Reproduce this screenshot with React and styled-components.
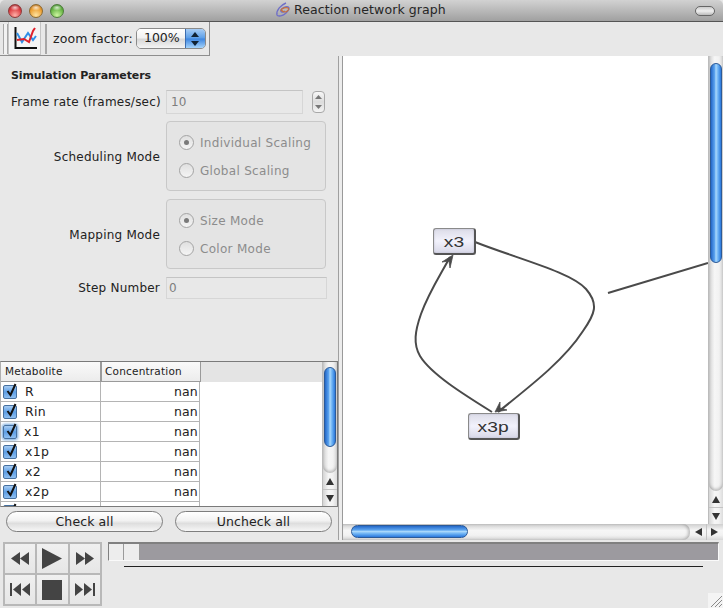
import React from 'react'
import styled, { createGlobalStyle } from 'styled-components'

const GlobalStyle = createGlobalStyle`
  html, body { margin: 0; padding: 0; overflow: hidden; background: #e8e8e8; }
  * { box-sizing: border-box; }
`

const Window = styled.div`
  position: relative;
  width: 723px;
  height: 608px;
  display: flex;
  flex-direction: column;
  background: #e8e8e8;
  font-family: "DejaVu Sans", sans-serif;
  font-size: 12px;
  color: #222;
  overflow: hidden;
`

const TitleBar = styled.div`
  position: relative;
  height: 22px;
  flex: none;
  display: flex;
  align-items: center;
  justify-content: center;
  gap: 3px;
  padding: 0 2px 2px 0;
  background: linear-gradient(#d2d2d2, #a0a0a0);
  border-bottom: 1px solid #555;
  border-radius: 5px 5px 0 0;
  font-size: 12.5px;
  letter-spacing: 0.1px;
  color: #262626;
`

const Lights = styled.div`
  position: absolute;
  left: 8px;
  top: 4px;
  display: flex;
  gap: 7px;
`

const Light = styled.span`
  width: 14px;
  height: 14px;
  border-radius: 50%;
  border: 1px solid ${(p) => p.$edge};
  background:
    radial-gradient(ellipse 5px 3px at 50% 22%, rgba(255, 255, 255, 0.75), transparent),
    radial-gradient(circle at 50% 85%, ${(p) => p.$glow}, ${(p) => p.$color} 60%, ${(p) => p.$dark});
`

const Pill = styled.span`
  position: absolute;
  right: 8px;
  top: 6px;
  width: 20px;
  height: 10px;
  border-radius: 5px;
  border: 1px solid #666;
  background: linear-gradient(#ccc, #eee 50%, #bbb);
`

const ToolBar = styled.div`
  width: 210px;
  height: 34px;
  flex: none;
  display: flex;
  align-items: center;
  border-right: 1px solid #8e8e8e;
  border-bottom: 1px solid #8e8e8e;
`

const Grip = styled.span`
  width: ${(p) => p.$width}px;
  height: 30px;
  flex: none;
  margin-left: ${(p) => p.$left}px;
  border-left: 1px solid #a8a8a8;
  border-right: 1px solid #a8a8a8;
  background: #f2f2f2;
`

const ToolButton = styled.div`
  width: 33px;
  height: 33px;
  flex: none;
  display: flex;
  align-items: center;
  justify-content: center;
  background: #f4f4f4;
  border: 1px solid #c4c4c4;
  border-top: none;
`

const ZoomLabel = styled.span`
  margin-left: 6px;
  font-size: 12.5px;
  letter-spacing: 0.1px;
`

const Select = styled.div`
  width: 70px;
  height: 21px;
  margin-left: 3px;
  flex: none;
  display: flex;
  border: 1px solid #8a8a8a;
  border-radius: 5px;
  overflow: hidden;
`

const SelectText = styled.span`
  flex: 1;
  text-align: center;
  line-height: 18px;
  padding-left: 2px;
  font-size: 12.5px;
  background: linear-gradient(#fff, #f2f2f2 45%, #d8d8d8 55%, #f4f4f4);
`

const SelectArrows = styled.span`
  width: 20px;
  display: flex;
  align-items: center;
  justify-content: center;
  background: linear-gradient(#a8cdf5, #5b9ee8 48%, #3d85e0 52%, #a6d4fb);
  border-left: 1px solid #3b6db0;
`

const Main = styled.div`
  height: 484px;
  flex: none;
  display: flex;
`

const LeftPanel = styled.div`
  width: 338px;
  flex: none;
  display: flex;
  flex-direction: column;
`

const Params = styled.div`
  height: 305px;
  flex: none;
  padding: 12px 0 0 11px;
  display: flex;
  flex-direction: column;
`

const SectionTitle = styled.div`
  font-weight: 700;
  font-size: 11px;
  letter-spacing: -0.1px;
  line-height: 15px;
`

const Row = styled.div`
  display: flex;
  align-items: center;
  margin-top: ${(p) => p.$top}px;
`

const Label = styled.div`
  width: 149px;
  flex: none;
  padding-top: ${(p) => (p.$drop ? 2 : 0)}px;
  text-align: right;
  white-space: nowrap;
  letter-spacing: 0.22px;
  font-size: 12px;
`

const TextField = styled.div`
  width: ${(p) => p.$width}px;
  height: ${(p) => p.$height}px;
  margin-left: 6px;
  flex: none;
  padding-left: ${(p) => p.$pad}px;
  line-height: ${(p) => p.$height - 2}px;
  color: #7e7e7e;
  font-size: 12px;
  background: #e8e8e8;
  border: 1px solid #d6d6d6;
  border-top-color: #c4c4c4;
`

const Stepper = styled.div`
  width: 13px;
  height: 22px;
  margin-left: 9px;
  flex: none;
  display: flex;
  align-items: center;
  justify-content: center;
  border: 1px solid #a8a8a8;
  border-radius: 4px;
  background: linear-gradient(#f8f8f8, #dcdcdc 50%, #f4f4f4);
`

const RadioBox = styled.div`
  width: 160px;
  height: 70px;
  margin-left: 6px;
  flex: none;
  display: flex;
  flex-direction: column;
  gap: 9px;
  padding: 11px 0 0 12px;
  border: 1px solid #c8c8c8;
  border-radius: 4px;
  background: #e4e4e4;
`

const RadioRow = styled.div`
  display: flex;
  align-items: center;
  gap: 6px;
  height: 19px;
  color: #8c8c8c;
  font-size: 12px;
  letter-spacing: 0.3px;
`

const RadioMark = styled.span`
  width: 15px;
  height: 15px;
  flex: none;
  display: flex;
  align-items: center;
  justify-content: center;
  border-radius: 50%;
  border: 1px solid #a4a4a4;
  background: linear-gradient(#e0e0e0, #f4f4f4);
  &::after {
    content: "";
    width: 5px;
    height: 5px;
    border-radius: 50%;
    background: ${(p) => (p.$on ? '#7a7a7a' : 'transparent')};
  }
`

const TableFrame = styled.div`
  height: 146px;
  flex: none;
  display: flex;
  border: 1px solid #7a7a7a;
  border-left-color: #b0b0b0;
  overflow: hidden;
`

const TableBody = styled.div`
  flex: 1;
  background: #fff;
  overflow: hidden;
`

const HeaderRow = styled.div`
  height: 20px;
  display: flex;
  background: #e4e4e4;
`

const HeaderCell = styled.div`
  width: ${(p) => p.$width}px;
  padding-left: ${(p) => (p.$first ? 4 : 3)}px;
  line-height: 18px;
  font-size: 10.5px;
  letter-spacing: 0.2px;
  background: linear-gradient(#fafafa, #ececec);
  border: 1px solid #9a9a9a;
  border-left: ${(p) => (p.$first ? 'none' : '1px solid #9a9a9a')};
  border-top: none;
`

const DataRow = styled.div`
  height: 20px;
  width: 199px;
  display: flex;
  border-bottom: 1px solid #b4b4b4;
`

const NameCell = styled.div`
  width: 100px;
  flex: none;
  display: flex;
  align-items: center;
  gap: ${(p) => (p.$focus ? 7 : 8)}px;
  padding-left: 2px;
  border-right: 1px solid #b4b4b4;
  font-size: 12.5px;
  letter-spacing: 0.3px;
`

const ValueCell = styled.div`
  width: 99px;
  text-align: right;
  padding-right: 1px;
  line-height: 19px;
  font-size: 12.5px;
  letter-spacing: 0.2px;
  border-right: 1px solid #b4b4b4;
`

const Check = styled.span`
  position: relative;
  width: 14px;
  height: 14px;
  flex: none;
  border: 1px solid #46709f;
  border-radius: 2px;
  background: linear-gradient(#a9cdf3, #5e9fe6 50%, #8fc0f2);
  box-shadow: ${(p) => (p.$focus ? '0 0 3px 1px #6fa4dc' : 'none')};
  & svg {
    position: absolute;
    left: 1px;
    top: -3px;
  }
`

const ScrollTrack = styled.div`
  position: relative;
  flex: none;
  display: flex;
  flex-direction: ${(p) => (p.$horizontal ? 'row' : 'column')};
  width: ${(p) => (p.$horizontal ? 'auto' : `${p.$size}px`)};
  height: ${(p) => (p.$horizontal ? `${p.$size}px` : 'auto')};
  background: ${(p) =>
    p.$horizontal
      ? 'linear-gradient(#cfcfcf, #f6f6f6 40%, #f2f2f2 70%, #d8d8d8)'
      : 'linear-gradient(90deg, #d4d4d4, #f6f6f6 40%, #f2f2f2 70%, #dcdcdc)'};
  border-left: ${(p) => (p.$horizontal ? 'none' : '1px solid #bcbcbc')};
`

const ScrollRail = styled.div`
  flex: 1;
  min-width: 0;
  min-height: 0;
  display: flex;
  flex-direction: ${(p) => (p.$horizontal ? 'row' : 'column')};
  padding: ${(p) => (p.$horizontal ? '1px 0 2px 8px' : `${p.$top}px 1px 0 1px`)};
  border-radius: ${(p) => (p.$horizontal ? '0 7px 7px 0' : '0 0 7px 7px')};
  box-shadow: ${(p) =>
    p.$horizontal ? 'inset -2px 0 3px rgba(0, 0, 0, 0.22)' : 'inset 0 -2px 3px rgba(0, 0, 0, 0.22)'};
`

const Thumb = styled.div`
  flex: none;
  width: ${(p) => (p.$horizontal ? `${p.$length}px` : 'auto')};
  height: ${(p) => (p.$horizontal ? 'auto' : `${p.$length}px`)};
  align-self: stretch;
  border-radius: 7px;
  border: 1px solid #2b5a98;
  background: ${(p) =>
    p.$horizontal
      ? 'linear-gradient(#2468c8, #5aa2ee 35%, #a9d8fb 50%, #6cb2f4 70%, #2a78dc)'
      : 'linear-gradient(90deg, #2468c8, #5aa2ee 35%, #a9d8fb 50%, #6cb2f4 70%, #2a78dc)'};
`

const ScrollEnd = styled.div`
  width: ${(p) => (p.$horizontal ? '33px' : 'auto')};
  height: ${(p) => (p.$horizontal ? 'auto' : '33px')};
  flex: none;
  display: flex;
  flex-direction: ${(p) => (p.$horizontal ? 'row' : 'column')};
`

const ScrollButton = styled.div`
  flex: 1;
  display: flex;
  align-items: center;
  justify-content: center;
  border-top: ${(p) => (p.$divide && !p.$horizontal ? '1px solid #c4c4c4' : 'none')};
  border-left: ${(p) => (p.$divide && p.$horizontal ? '1px solid #c4c4c4' : 'none')};
`

const ButtonRow = styled.div`
  display: flex;
  gap: 12px;
  padding: 4px 0 0 6px;
`

const PillButton = styled.button`
  width: 157px;
  height: 21px;
  padding: 0;
  font-family: inherit;
  font-size: 12.5px;
  letter-spacing: 0.1px;
  color: #222;
  border: 1px solid #7e7e7e;
  border-radius: 11px;
  background: linear-gradient(#fff, #f2f2f2 45%, #dedede 60%, #f6f6f6);
`

const Splitter = styled.div`
  width: 5px;
  flex: none;
  border-left: 1px solid #a0a0a0;
  border-right: 1px solid #9a9a9a;
  background: #ececec;
`

const RightPanel = styled.div`
  flex: 1;
  min-width: 0;
  display: flex;
  flex-direction: column;
`

const CanvasRow = styled.div`
  flex: 1;
  min-height: 0;
  display: flex;
`

const Canvas = styled.div`
  position: relative;
  flex: 1;
  min-width: 0;
  background: #fff;
  overflow: hidden;
`

const Edges = styled.svg`
  position: absolute;
  left: 0;
  top: 0;
`

const Node = styled.div`
  position: absolute;
  left: ${(p) => p.$x}px;
  top: ${(p) => p.$y}px;
  width: ${(p) => p.$w}px;
  height: ${(p) => p.$h}px;
  display: flex;
  align-items: center;
  justify-content: center;
  border: 1px solid #8a8a8a;
  border-right: 2px solid #555;
  border-bottom: 2px solid #555;
  border-radius: 3px;
  background: linear-gradient(#dcdce8, #f2f2fc 50%, #d8d8e8);
  box-shadow: inset 0 0 2px #b8b8c8;
`

const NodeText = styled.span`
  display: block;
  font-family: "Liberation Sans", sans-serif;
  font-size: 15px;
  line-height: 1;
  color: #333;
  transform: scaleX(1.28);
`

const BottomBar = styled.div`
  flex: 1;
  display: flex;
  padding: 2px 0 0 3px;
`

const Transport = styled.div`
  width: 99px;
  height: 64px;
  flex: none;
  display: grid;
  grid-template-columns: repeat(3, 1fr);
  grid-template-rows: repeat(2, 1fr);
  border: 1px solid #b8b8b8;
`

const TransportButton = styled.div`
  display: flex;
  align-items: center;
  justify-content: center;
  background: linear-gradient(#f0f0f0, #e6e6e6);
  border: 1px solid #b8b8b8;
`

const SliderColumn = styled.div`
  width: 611px;
  margin-left: 6px;
  flex: none;
  display: flex;
  flex-direction: column;
`

const SliderTrack = styled.div`
  height: 19px;
  display: flex;
  background: #9c9a9f;
  border-top: 2px solid #808080;
  border-left: 1px solid #808080;
  border-bottom: 1px solid #fafafa;
  border-right: 1px solid #fafafa;
`

const SliderKnob = styled.span`
  width: ${(p) => p.$width}px;
  flex: none;
  background: #ededed;
  border-right: 1px solid #9a9a9a;
`

const SliderRule = styled.div`
  height: 1px;
  margin: 5px 16px 0 16px;
  background: #222;
`

const ResizeCorner = styled.svg`
  position: absolute;
  right: 0;
  bottom: 0;
`

const metabolites = ['R', 'Rin', 'x1', 'x1p', 'x2', 'x2p', '']

const Arrow = ({ dir, color = '#333', size = 8 }) => {
  const pts = {
    up: '0,8 4,1 8,8',
    down: '0,1 4,8 8,1',
    left: '8,0 1,4 8,8',
    right: '0,0 7,4 0,8',
  }
  return (
    <svg width={size} height={size} viewBox="0 0 8 8">
      <polygon points={pts[dir]} fill={color} />
    </svg>
  )
}

const VScroll = ({ size, top, length }) => (
  <ScrollTrack $size={size}>
    <ScrollRail $top={top}>
      <Thumb $length={length} />
    </ScrollRail>
    <ScrollEnd>
      <ScrollButton><Arrow dir="up" /></ScrollButton>
      <ScrollButton $divide><Arrow dir="down" /></ScrollButton>
    </ScrollEnd>
  </ScrollTrack>
)

const ChartIcon = () => (
  <svg width="26" height="26" viewBox="0 0 26 26" fill="none">
    <path d="M3.5 2v21H25" stroke="#111" strokeWidth="2" />
    <path d="M5 8l5 9 6-9 5 7 3-4" stroke="#2f8fe8" strokeWidth="2" />
    <path d="M5 15l7-1 5 3 4-11 2-3" stroke="#e0202a" strokeWidth="2" />
  </svg>
)

const SwirlIcon = () => (
  <svg width="16" height="16" viewBox="0 0 16 16" fill="none">
    <path d="M11 1C6 3 1 8 2 13c1 2 6 1 9-2s4-5 2-6-6 1-7 3 2 3 4 1" stroke="#6f6fc8" strokeWidth="1.4" />
    <path d="M6 8c1-2 5-3 7-2s-1 4-3 4-3-1-4-2z" stroke="#c8703a" strokeWidth="1.2" />
  </svg>
)

const TransportIcon = ({ kind }) => {
  if (kind === 'play') {
    return <svg width="20" height="21" viewBox="0 0 20 21"><polygon points="0,0 20,10.5 0,21" fill="#444" /></svg>
  }
  if (kind === 'stop') {
    return <svg width="20" height="20" viewBox="0 0 20 20"><rect width="20" height="20" fill="#444" /></svg>
  }
  if (kind === 'first') {
    return (
      <svg width="20" height="13" viewBox="0 0 20 13" fill="#444">
        <rect x="0" y="0" width="2" height="13" />
        <polygon points="11,0 3,6.5 11,13" />
        <polygon points="20,0 12,6.5 20,13" />
      </svg>
    )
  }
  if (kind === 'last') {
    return (
      <svg width="20" height="13" viewBox="0 0 20 13" fill="#444">
        <polygon points="0,0 8,6.5 0,13" />
        <polygon points="9,0 17,6.5 9,13" />
        <rect x="18" y="0" width="2" height="13" />
      </svg>
    )
  }
  if (kind === 'rew') {
    return (
      <svg width="18" height="13" viewBox="0 0 18 13" fill="#444">
        <polygon points="9,0 0,6.5 9,13" />
        <polygon points="18,0 9,6.5 18,13" />
      </svg>
    )
  }
  return (
    <svg width="18" height="13" viewBox="0 0 18 13" fill="#444">
      <polygon points="0,0 9,6.5 0,13" />
      <polygon points="9,0 18,6.5 9,13" />
    </svg>
  )
}

const Radio = ({ on, children }) => (
  <RadioRow>
    <RadioMark $on={on} />
    {children}
  </RadioRow>
)

const App = () => (
  <Window>
    <GlobalStyle />
    <TitleBar>
      <Lights>
        <Light $color="#dc3c40" $glow="#ffb0a8" $dark="#8c1218" $edge="#8d3a3a" />
        <Light $color="#ec9e30" $glow="#ffe3a0" $dark="#a65a10" $edge="#8d6a30" />
        <Light $color="#66b444" $glow="#cdf5a0" $dark="#2f7a1c" $edge="#4d7d3a" />
      </Lights>
      <SwirlIcon />
      Reaction network graph
      <Pill />
    </TitleBar>

    <ToolBar>
      <Grip $width={5} $left={3} />
      <ToolButton><ChartIcon /></ToolButton>
      <Grip $width={2} $left={4} />
      <ZoomLabel>zoom factor:</ZoomLabel>
      <Select>
        <SelectText>100%</SelectText>
        <SelectArrows>
          <svg width="8" height="14" viewBox="0 0 8 14" fill="#123">
            <polygon points="4,0 8,5 0,5" />
            <polygon points="4,14 8,9 0,9" />
          </svg>
        </SelectArrows>
      </Select>
    </ToolBar>

    <Main>
      <LeftPanel>
        <Params>
          <SectionTitle>Simulation Parameters</SectionTitle>
          <Row $top={7}>
            <Label>Frame rate (frames/sec)</Label>
            <TextField $width={137} $height={24} $pad={4}>10</TextField>
            <Stepper>
              <svg width="7" height="16" viewBox="0 0 7 16" fill="#777">
                <polygon points="3.5,1 7,5 0,5" />
                <polygon points="3.5,15 7,11 0,11" />
              </svg>
            </Stepper>
          </Row>
          <Row $top={7}>
            <Label $drop>Scheduling Mode</Label>
            <RadioBox>
              <Radio on>Individual Scaling</Radio>
              <Radio>Global Scaling</Radio>
            </RadioBox>
          </Row>
          <Row $top={8}>
            <Label $drop>Mapping Mode</Label>
            <RadioBox>
              <Radio on>Size Mode</Radio>
              <Radio>Color Mode</Radio>
            </RadioBox>
          </Row>
          <Row $top={8}>
            <Label>Step Number</Label>
            <TextField $width={161} $height={22} $pad={2}>0</TextField>
          </Row>
        </Params>

        <TableFrame>
          <TableBody>
            <HeaderRow>
              <HeaderCell $first $width={100}>Metabolite</HeaderCell>
              <HeaderCell $width={100}>Concentration</HeaderCell>
            </HeaderRow>
            {metabolites.map((name, i) => (
              <DataRow key={i}>
                <NameCell $focus={name === 'x1'}>
                  <Check $focus={name === 'x1'}>
                    <svg width="13" height="15" viewBox="0 0 13 15" fill="none">
                      <path d="M2.5 8l3 4 5-11" stroke="#111" strokeWidth="2" />
                    </svg>
                  </Check>
                  {name}
                </NameCell>
                <ValueCell>{name && 'nan'}</ValueCell>
              </DataRow>
            ))}
          </TableBody>
          <VScroll size={15} top={5} length={80} />
        </TableFrame>

        <ButtonRow>
          <PillButton>Check all</PillButton>
          <PillButton>Uncheck all</PillButton>
        </ButtonRow>
      </LeftPanel>

      <Splitter />

      <RightPanel>
        <CanvasRow>
          <Canvas>
            <Edges width="365" height="468" viewBox="0 0 365 468" fill="none">
              <g stroke="#4a4a4a" strokeWidth="2">
                <path d="M132 186C175 203 228 216 243 233C256 248 252 258 240 275C222 303 190 328 155 356" />
                <path d="M149 356C120 338 88 318 77 300C70 288 72 275 78 258C86 236 98 218 107 201" />
                <path d="M265 237L365 207" />
              </g>
              <path d="M110 199L99 206L106 205L107 212Z" fill="#4a4a4a" stroke="#4a4a4a" strokeWidth="0.8" />
              <path d="M152 356L164 354L157 352L157 346Z" fill="#4a4a4a" stroke="#4a4a4a" strokeWidth="0.8" />
            </Edges>
            <Node $x={90} $y={172} $w={43} $h={27}><NodeText>x3</NodeText></Node>
            <Node $x={125} $y={357} $w={52} $h={27}><NodeText>x3p</NodeText></Node>
          </Canvas>
          <VScroll size={15} top={7} length={200} />
        </CanvasRow>
        <ScrollTrack $horizontal $size={16}>
          <ScrollRail $horizontal>
            <Thumb $horizontal $length={117} />
          </ScrollRail>
          <ScrollEnd $horizontal>
            <ScrollButton $horizontal><Arrow dir="left" /></ScrollButton>
            <ScrollButton $horizontal $divide><Arrow dir="right" /></ScrollButton>
          </ScrollEnd>
        </ScrollTrack>
      </RightPanel>
    </Main>

    <BottomBar>
      <Transport>
        <TransportButton><TransportIcon kind="rew" /></TransportButton>
        <TransportButton><TransportIcon kind="play" /></TransportButton>
        <TransportButton><TransportIcon kind="fwd" /></TransportButton>
        <TransportButton><TransportIcon kind="first" /></TransportButton>
        <TransportButton><TransportIcon kind="stop" /></TransportButton>
        <TransportButton><TransportIcon kind="last" /></TransportButton>
      </Transport>
      <SliderColumn>
        <SliderTrack>
          <SliderKnob $width={15} />
          <SliderKnob $width={16} />
        </SliderTrack>
        <SliderRule />
      </SliderColumn>
    </BottomBar>

    <ResizeCorner width="15" height="15" viewBox="0 0 15 15">
      <rect width="15" height="15" fill="#f4f4f4" />
      <path d="M3 14L14 3M7 14L14 7M11 14L14 11" stroke="#8a8a8a" />
    </ResizeCorner>
  </Window>
)

export default App
